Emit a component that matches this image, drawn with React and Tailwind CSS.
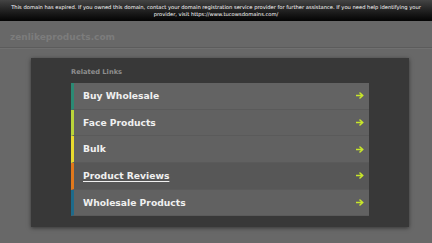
import React from "react";

const items = [
  { label: "Buy Wholesale", color: "border-[#2b8a74]", bg: "bg-[#636363]" },
  { label: "Face Products", color: "border-[#b9d43a]", bg: "bg-[#616161]" },
  { label: "Bulk", color: "border-[#e8da2e]", bg: "bg-[#616161]" },
  { label: "Product Reviews", color: "border-[#e0781c]", bg: "bg-[#575757]", hover: true },
  { label: "Wholesale Products", color: "border-[#1e6a8a]", bg: "bg-[#616161]" },
];

function Arrow() {
  return (
    <svg width="8" height="7" viewBox="0 0 8 7" className="text-[#c8e62a]">
      <path d="M0.5 3.5H6.5M4 1L6.8 3.5L4 6" stroke="currentColor" strokeWidth="1.6" fill="none" strokeLinecap="round" strokeLinejoin="round" />
    </svg>
  );
}

export default function App() {
  return (
    <div className="w-[432px] h-[243px] bg-[#686868] overflow-hidden font-['DejaVu_Sans',sans-serif]">
      <div className="h-[21px] bg-gradient-to-b from-[#444] to-[#050505] text-white text-[5.2px] leading-[7px] text-center pt-[3.5px] px-[5px]">
        This domain has expired. If you owned this domain, contact your domain registration service provider for further assistance. If you need help identifying your provider, visit https://www.tucowsdomains.com/
      </div>
      <div className="h-[27px] border-b border-[#5c5c5c] flex items-center pl-[10px] pt-[7px]">
        <span className="text-[#7c7c7c] font-bold text-[9px]">zenlikeproducts.com</span>
      </div>
      <div className="border-t border-[#707070]" />
      <div className="pl-[31px] pt-[9px]">
        <div className="w-[378px] h-[169px] bg-[#383838] shadow-[0_1px_4px_rgba(0,0,0,0.5)] pl-[40px] pt-[9px]">
          <div className="text-[#8e8e8e] font-bold text-[6.7px] h-[16px] leading-[10px]">Related Links</div>
          <div className="w-[298px]">
            {items.map((it) => (
              <div
                key={it.label}
                className={`h-[26.7px] border-l-[3px] ${it.color} ${it.bg} border-b border-b-[#5a5a5a] flex items-center justify-between pl-[9px] pr-[5px]`}
              >
                <span className={`text-[#f0f0f0] font-bold text-[9.2px] ${it.hover ? "underline underline-offset-2" : ""}`}>
                  {it.label}
                </span>
                <Arrow />
              </div>
            ))}
          </div>
        </div>
      </div>
    </div>
  );
}
